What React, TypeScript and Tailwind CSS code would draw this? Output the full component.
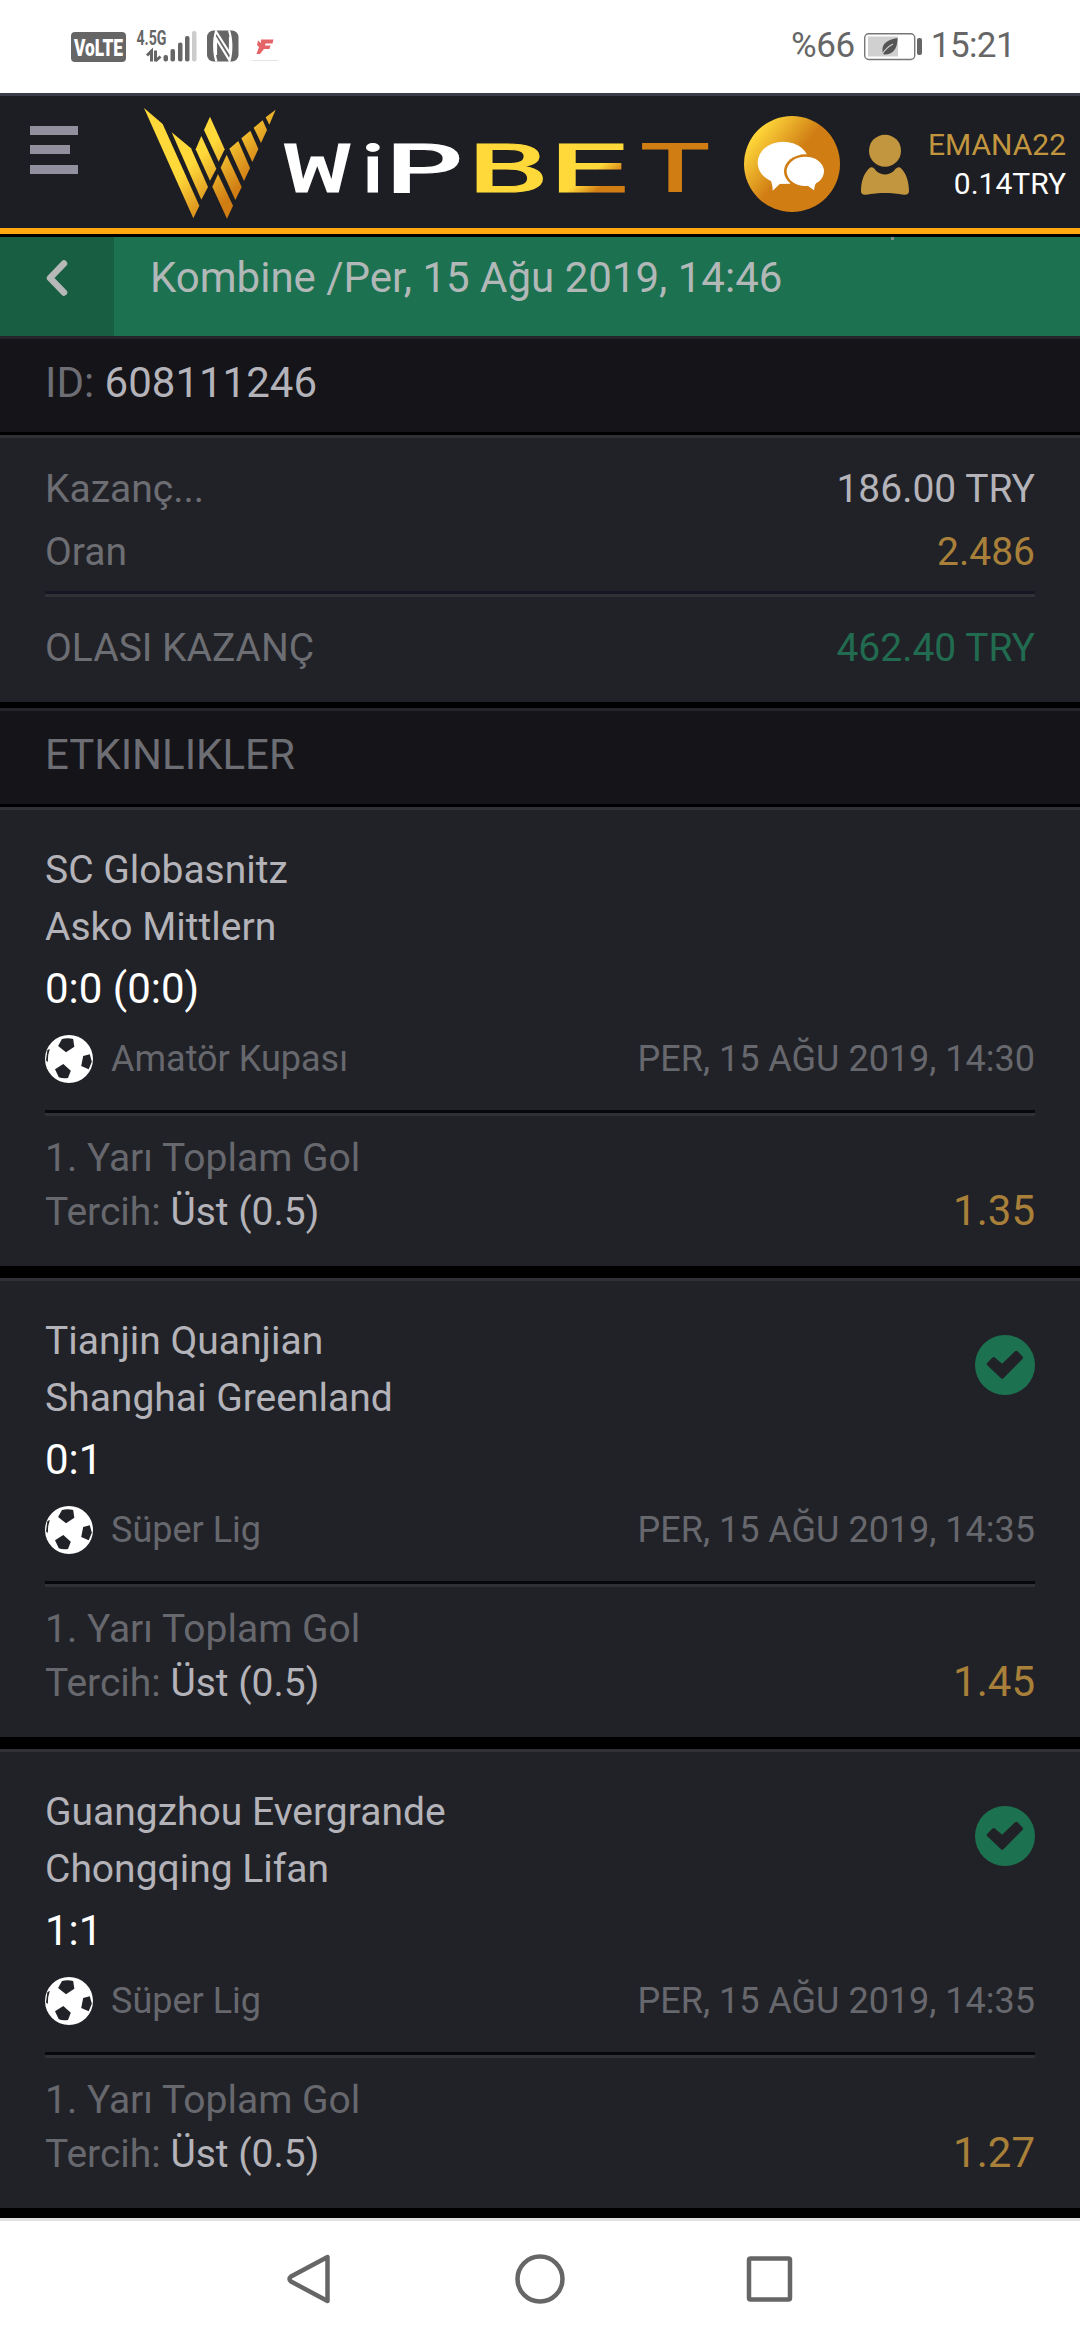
import type { ReactNode } from "react";

type Bet = {
  home: string;
  away: string;
  score: string;
  league: string;
  date: string;
  odds: string;
  won: boolean;
};

const bets: Bet[] = [
  {
    home: "SC Globasnitz",
    away: "Asko Mittlern",
    score: "0:0 (0:0)",
    league: "Amatör Kupası",
    date: "PER, 15 AĞU 2019, 14:30",
    odds: "1.35",
    won: false,
  },
  {
    home: "Tianjin Quanjian",
    away: "Shanghai Greenland",
    score: "0:1",
    league: "Süper Lig",
    date: "PER, 15 AĞU 2019, 14:35",
    odds: "1.45",
    won: true,
  },
  {
    home: "Guangzhou Evergrande",
    away: "Chongqing Lifan",
    score: "1:1",
    league: "Süper Lig",
    date: "PER, 15 AĞU 2019, 14:35",
    odds: "1.27",
    won: true,
  },
];

const letters = [
  { char: "W", x: 285, scale: 1.65, font: "DejaVu Sans Mono", fill: "#fff" },
  { char: "i", x: 361, scale: 1.5, font: "Inter", fill: "#fff" },
  { char: "P", x: 382, scale: 2.1, font: "DejaVu Sans Mono", fill: "#fff" },
  { char: "B", x: 467, scale: 2.07, font: "DejaVu Sans Mono", fill: "#ffd83a" },
  { char: "E", x: 546.5, scale: 2.2, font: "DejaVu Sans Mono", fill: "url(#word)" },
  { char: "T", x: 640.5, scale: 1.77, font: "DejaVu Sans Mono", fill: "#d07d14" },
];

function StatusBar() {
  return (
    <div className="flex h-[93px] shrink-0 items-center bg-white pl-[71px] pr-[65px] text-[#666]">
      <svg width="210" height="50" viewBox="71 21 210 50">
        <rect x="71" y="31" width="55" height="30" rx="4" fill="#666" />
        <text
          x="74"
          y="54.5"
          fill="#fff"
          fontSize="23"
          fontWeight="900"
          textLength="49"
          lengthAdjust="spacingAndGlyphs"
        >
          VoLTE
        </text>
        <text
          x="136.5"
          y="43.5"
          fill="#666"
          fontSize="20"
          fontWeight="700"
          textLength="30"
          lengthAdjust="spacingAndGlyphs"
        >
          4.5G
        </text>
        <path
          d="M147 54.5 151.500 50V60.500M155.500 49.500V60.500M155.500 60 160.500 55.500"
          fill="none"
          stroke="#666"
          strokeWidth="3"
        />
        <rect x="163.500" y="54" width="4.500" height="6.500" rx="2" fill="#666" />
        <rect x="170.500" y="48" width="4.500" height="12.500" rx="2" fill="#666" />
        <rect x="178" y="41.500" width="4.500" height="19" rx="2" fill="#666" />
        <rect x="185" y="35" width="4.500" height="25.500" rx="2" fill="#666" />
        <rect x="192" y="30" width="4.500" height="30.500" rx="2" fill="#ccc" />
        <rect x="207" y="29.500" width="31.500" height="31" rx="6.500" fill="#666" />
        <path
          d="M216.500 60.500C213.500 52 213.500 38 216 30.500L230 52.500V36M229 29.500C232 38 232 52 229.500 59.500L216 37.500V54"
          fill="none"
          stroke="#fff"
          strokeWidth="2.200"
        />
        <rect x="251.500" y="33" width="27" height="27" rx="1.500" fill="#e4e4e4" />
        <rect x="251" y="31.500" width="28" height="27.500" rx="1.500" fill="#fff" />
        <path
          d="M261 38.500H273.500L272.500 42.500H265.500L265 44.500H270.500L269.500 48H264L260 53H256.500L259 46 257 44 258 39.500 261 42Z"
          fill="#e56468"
        />
      </svg>

      <div className="ml-auto flex items-center">
        <span className="text-[35px] tracking-[-0.4px]">%66</span>
        <svg className="ml-[8px]" width="60" height="30" viewBox="861 31 60 30">
          <rect
            x="862.700"
            y="32.700"
            width="50"
            height="25.800"
            rx="4"
            fill="none"
            stroke="#777"
            strokeWidth="1.400"
          />
          <rect x="866" y="35.500" width="30" height="20" fill="#d0d0d0" />
          <rect x="915" y="37" width="5" height="17" rx="2" fill="#666" />
          <path
            d="M895.500 37C885 39 880 42.500 880.500 50C880.500 51 881 52.500 882 53.500C890 54 895.500 49 895.500 37Z"
            fill="#555"
          />
          <path d="M881 52C884 47.500 887 45 891 43" fill="none" stroke="#d0d0d0" strokeWidth="1.200" />
        </svg>
        <span className="ml-[8px] text-[35px] tracking-[-0.6px]">15:21</span>
      </div>
    </div>
  );
}

function Logo() {
  return (
    <svg className="ml-[62px]" width="575" height="132" viewBox="140 96 575 132">
      <defs>
        <linearGradient id="emblem" gradientUnits="userSpaceOnUse" x1="205" y1="205" x2="310" y2="310">
          <stop offset="0" stopColor="#ffd83a" />
          <stop offset="1" stopColor="#d07d14" />
        </linearGradient>
        <linearGradient id="word" gradientUnits="userSpaceOnUse" x1="18" y1="-15" x2="28" y2="-9">
          <stop offset="0" stopColor="#ffd83a" />
          <stop offset="1" stopColor="#d07d14" />
        </linearGradient>
      </defs>
      <g transform="translate(130 90) scale(0.33333)" fill="url(#emblem)">
        <path d="M42 54 98 102 208 347 190 385Z" />
        <path d="M125 127 183 175 234 291 214 329Z" />
        <path d="M214 138 259 236 240 272 197 178Z" />
        <path d="M240 80 284 178 266 215 222 120Z" />
        <path d="M264 252 309 347 291 386 247 290Z" />
        <path d="M290 194 335 291 316 330 272 233Z" />
        <path d="M298 176 325 153 360 234 342 273Z" />
        <path d="M334 145 361 122 385 177 367 216Z" />
        <path d="M371 113 398 91 411 120 393 159Z" />
        <path d="M407 82 437 59 418 104Z" />
      </g>
      {letters.map((l) => (
        <text
          key={l.char}
          transform={`translate(${l.x} 191.5) scale(${l.scale} 1)`}
          fontFamily={l.font}
          fontSize="65"
          fill={l.fill}
          stroke={l.fill}
          strokeWidth="1.200"
        >
          {l.char}
        </text>
      ))}
    </svg>
  );
}

function ChatButton() {
  return (
    <svg className="ml-[29px] mt-1" width="96" height="96" viewBox="132 348 288 288">
      <defs>
        <linearGradient id="chat" x1="0.12" y1="0.18" x2="0.5" y2="0.48">
          <stop offset="0" stopColor="#ffd83a" />
          <stop offset="1" stopColor="#d07d14" />
        </linearGradient>
      </defs>
      <circle cx="276" cy="492" r="144" fill="url(#chat)" />
      <ellipse cx="250" cy="488" rx="77" ry="63" fill="#fff" />
      <path d="M210 535C216 550 218 560 218 572L240 551H272L262 530Z" fill="#fff" />
      <ellipse cx="316" cy="514" rx="64" ry="51" fill="#d07d14" />
      <ellipse cx="316" cy="514" rx="56" ry="44" fill="#fff" />
      <path d="M320 555 342 571C343 562 345 553 350 545Z" fill="#fff" />
    </svg>
  );
}

function UserIcon() {
  return (
    <svg className="ml-[21px] mt-[5px]" width="48" height="62" viewBox="483 403 144 186" fill="#c2963f">
      <circle cx="555" cy="453" r="48" />
      <path d="M512 503C520 502 524 508 528 513C545 528 565 528 582 513C587 507 592 502 599 503C617 516 627 545 627 574C627 582 622 586 611 585C575 578 535 578 499 585C488 586 483 583 483 574C483 545 493 516 512 503Z" />
    </svg>
  );
}

function Header() {
  return (
    <header className="flex h-[144px] shrink-0 items-center border-b-[3px] border-t-[3px] border-b-black border-t-[#3a3c47] bg-[#1d1e23]">
      <div className="flex h-full w-full items-center border-b-[6px] border-[#ffa80f]">
        <div className="mb-6 ml-[30px] flex w-12 flex-col gap-2.5">
          <span className="h-[9px] bg-[#92909f]" />
          <span className="h-[9px] w-10 bg-[#92909f]" />
          <span className="mt-px h-[9px] bg-[#92909f]" />
        </div>
        <Logo />
        <ChatButton />
        <UserIcon />
        <div className="ml-auto mt-1 pr-3.5 text-right text-[30px] leading-[39px]">
          <p className="text-[#c2963f]">EMANA22</p>
          <p className="text-white">0.14TRY</p>
        </div>
      </div>
    </header>
  );
}

function TitleBar() {
  return (
    <div className="relative flex h-[99px] shrink-0 bg-[#1c7150] text-[#b2b8b8]">
      <button className="flex w-[114px] items-center justify-center bg-[#185e42] pb-[17px]">
        <svg width="22" height="36" viewBox="0 0 22 36" fill="none" stroke="#b7b8b8" strokeWidth="6.500">
          <path d="M18 3.500 4 18 18 32.500" strokeLinecap="round" strokeLinejoin="round" />
        </svg>
      </button>
      <h1 className="flex items-center pb-[18px] pl-9 text-[42px]">
        Kombine /Per, 15 Ağu 2019, 14:46
      </h1>
      <span className="absolute left-[891px] top-0 h-[3px] w-[3px] bg-[#7d8f8b]" />
    </div>
  );
}

function SectionBar({ children }: { children: ReactNode }) {
  return (
    <div className="flex h-[99px] shrink-0 items-center border-b-[3px] border-t-[3px] border-b-black border-t-[#24252a] bg-[#151419] px-[45px] pb-1.5 text-[42px] text-[#6d6e74]">
      {children}
    </div>
  );
}

function Row({ label, value, color }: { label: string; value: string; color: string }) {
  return (
    <div className="flex h-[63px] items-center justify-between">
      <span className="text-[#6d6e74]">{label}</span>
      <span className={color}>{value}</span>
    </div>
  );
}

function Summary() {
  return (
    <section className="h-[273px] shrink-0 border-b-[6px] border-t-[3px] border-b-black border-t-[#303137] bg-[#212227] px-[45px] pt-5 text-[39px]">
      <Row label="Kazanç..." value="186.00 TRY" color="text-[#b3b3b9]" />
      <Row label="Oran" value="2.486" color="text-[#a98039]" />
      <div className="mb-5 mt-[7px] h-1.5 border-b-[3px] border-t-[3px] border-b-[#303137] border-t-[#151824]" />
      <Row label="OLASI KAZANÇ" value="462.40 TRY" color="text-[#216c50]" />
    </section>
  );
}

function Ball() {
  return (
    <svg width="48" height="48" viewBox="0 0 48 48" fill="#212227">
      <circle cx="24" cy="24" r="24" fill="#fff" />
      <path d="M17 4Q22.500 2.500 28.200 4L29.300 11.700 21 17.300 13.100 11Z" />
      <path d="M38.200 21 44.800 19.300 46.800 26.700 43.700 34.300 36.200 31Z" />
      <path d="M18.300 29 25.800 35.700 23 43Q18 44 13.800 42.300L10 34.300Z" />
      <path d="M2.400 15 4.800 14 3.200 20 2.800 27 1 25.500Z" />
    </svg>
  );
}

function WonBadge() {
  return (
    <svg className="mt-[22px]" width="60" height="60" viewBox="0 0 60 60">
      <circle cx="30" cy="30" r="30" fill="#1c7150" />
      <path
        d="M13.500 29 18.700 23.800 27.200 31 41.300 17.500 46.200 22.800 27.200 42Z"
        fill="#212227"
        stroke="#212227"
        strokeWidth="3.500"
        strokeLinejoin="round"
      />
    </svg>
  );
}

function BetCard({ bet }: { bet: Bet }) {
  return (
    <article className="h-[471px] shrink-0 border-b-[12px] border-t-[3px] border-b-black border-t-[#303137] bg-[#212227] px-[45px] pt-8 text-[39px]">
      <div className="flex h-[114px] items-start justify-between leading-[57px] text-[#b3b3b9]">
        <div>
          <p>{bet.home}</p>
          <p>{bet.away}</p>
        </div>
        {bet.won && <WonBadge />}
      </div>
      <p className="mt-[3px] text-[42px] leading-[60px] text-white">{bet.score}</p>
      <div className="mt-4 flex h-12 items-center text-4xl text-[#67686e]">
        <Ball />
        <span className="ml-[18px]">{bet.league}</span>
        <span className="ml-auto">{bet.date}</span>
      </div>
      <div className="mb-[15px] mt-[27px] h-1.5 border-b-[3px] border-t-[3px] border-b-[#303137] border-t-[#07080c]" />
      <p className="leading-[54px] text-[#67686e]">1. Yarı Toplam Gol</p>
      <div className="-mt-px flex items-baseline justify-between leading-[54px]">
        <p className="text-[#67686e]">
          Tercih: <span className="text-[#b3b3b9]">Üst (0.5)</span>
        </p>
        <span className="text-[42px] text-[#a98039]">{bet.odds}</span>
      </div>
    </article>
  );
}

function NavBar() {
  return (
    <nav className="flex h-[122px] shrink-0 items-center gap-[180px] border-t-[3px] border-[#e0e0e0] bg-white pb-[3px] pl-[285px]">
      <svg width="50" height="50" viewBox="0 0 50 50" fill="none" stroke="#666" strokeWidth="4.500">
        <path d="M42.500 3V47L6 27.500Q3 25 6 22.500Z" strokeLinejoin="round" />
      </svg>
      <svg width="50" height="50" viewBox="0 0 50 50" fill="none" stroke="#666" strokeWidth="4.500">
        <circle cx="25" cy="25" r="22.500" />
      </svg>
      <svg width="50" height="50" viewBox="0 0 50 50" fill="none" stroke="#666" strokeWidth="4.500">
        <rect x="4" y="4.500" width="41" height="41" rx="1.500" />
      </svg>
    </nav>
  );
}

export default function App() {
  return (
    <div className="flex h-[2340px] w-[1080px] flex-col overflow-hidden bg-black font-['Roboto',sans-serif]">
      <StatusBar />
      <Header />
      <TitleBar />
      <SectionBar>
        <p>
          ID: <span className="text-[#b3b3b9]">608111246</span>
        </p>
      </SectionBar>
      <Summary />
      <SectionBar>ETKINLIKLER</SectionBar>
      <main className="flex h-[1411px] shrink-0 flex-col overflow-hidden">
        {bets.map((bet) => (
          <BetCard key={bet.home} bet={bet} />
        ))}
      </main>
      <NavBar />
    </div>
  );
}
